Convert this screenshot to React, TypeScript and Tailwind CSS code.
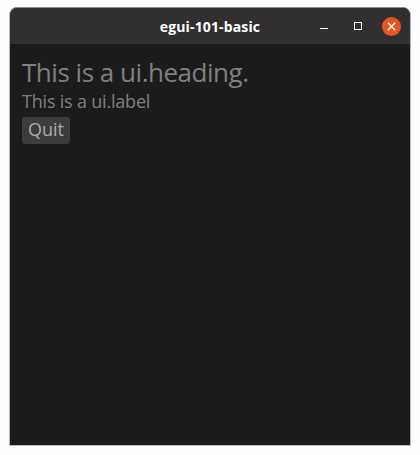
function TitleBar() {
  return (
    <header className="grid h-[36px] shrink-0 grid-cols-[1fr_auto_1fr] items-center rounded-t-[7px] bg-[#322f30]">
      <span />
      <h1 className="pt-[2px] font-['Open_Sans',sans-serif] text-[14px] leading-[20px] font-bold tracking-[0.14px] text-white">
        egui-101-basic
      </h1>
      <div className="flex items-center justify-end pr-[9px]">
        <button aria-label="Minimize" className="mr-[26px] flex h-[8px] w-[8px] items-end pb-px">
          <span className="block h-px w-[8px] bg-white" />
        </button>
        <button aria-label="Maximize" className="mr-[20px] h-[8px] w-[8px] border border-white" />
        <button aria-label="Close" className="flex h-[19px] w-[19px] items-center justify-center rounded-full bg-[#e95420]">
          <svg width="9" height="9" viewBox="0 0 9 9" fill="none" stroke="white" strokeWidth="1.4">
            <path d="M0.8 0.8 8.2 8.2M8.2 0.8 0.8 8.2" />
          </svg>
        </button>
      </div>
    </header>
  );
}

export default function App() {
  return (
    <div className="h-[455px] w-[420px] bg-[#fefefe] pt-[7px] pl-[9px]">
      <div className="flex h-[439px] w-[402px] flex-col rounded-t-[8px] border border-[#b8b8b8] border-t-[#8c8c8c] bg-[#1b1b1b]">
        <TitleBar />
        <main className="flex flex-col items-start pt-[12px] pl-[12px] font-['Open_Sans',sans-serif] whitespace-nowrap text-[#808080]">
          <h2 className="text-[26px] leading-[32px] font-normal tracking-[-0.48px]">This is a ui.heading.</h2>
          <p className="pt-px text-[18px] leading-[24px] tracking-[-0.2px]">This is a ui.label</p>
          <button className="mt-[4px] flex h-[27px] w-[48px] items-center justify-center rounded-[3px] bg-[#3c3c3c] pb-[3px] text-[18px] leading-[24px] text-[#adadad]">
            Quit
          </button>
        </main>
      </div>
    </div>
  );
}
